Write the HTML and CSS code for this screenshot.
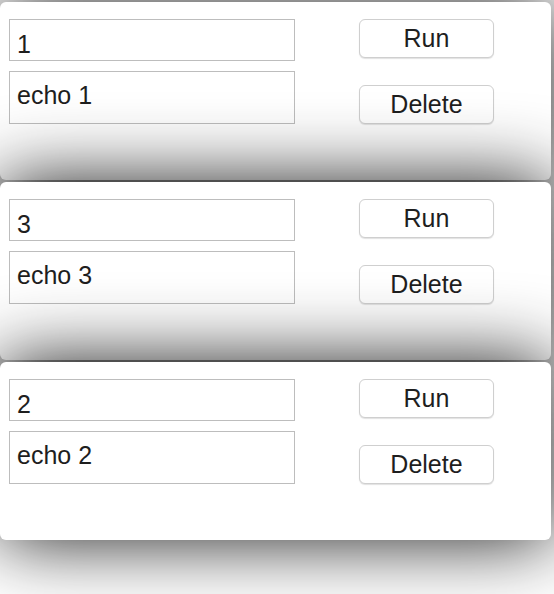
FILE: index.html
```html
<!DOCTYPE html>
<html>
<head>
<meta charset="utf-8">
<link rel="stylesheet" href="styles.css">
</head>
<body>
<div class="list">
  <div class="card">
    <div class="fields">
      <input class="name" type="text" value="1">
      <textarea class="cmd">echo 1</textarea>
    </div>
    <div class="actions">
      <button class="btn">Run</button>
      <button class="btn">Delete</button>
    </div>
  </div>
  <div class="card">
    <div class="fields">
      <input class="name" type="text" value="3">
      <textarea class="cmd">echo 3</textarea>
    </div>
    <div class="actions">
      <button class="btn">Run</button>
      <button class="btn">Delete</button>
    </div>
  </div>
  <div class="card">
    <div class="fields">
      <input class="name" type="text" value="2">
      <textarea class="cmd">echo 2</textarea>
    </div>
    <div class="actions">
      <button class="btn">Run</button>
      <button class="btn">Delete</button>
    </div>
  </div>
</div>
</body>
</html>
```
FILE: styles.css
```css
html, body {
  margin: 0;
  background: #ffffff;
  font-family: "Liberation Sans", Arial, sans-serif;
}

body {
  min-height: 594px;
}

.list {
  display: flex;
  flex-direction: column;
  gap: 2px;
  padding: 2px 0 54px;
  width: 551px;
}

.card {
  height: 178px;
  flex: none;
  box-sizing: border-box;
  background: #ffffff;
  border-radius: 6px;
  box-shadow: 0 0 76px rgba(0, 0, 0, 0.9);
  display: flex;
  align-items: flex-start;
  gap: 64px;
  padding: 17px 0 0 9px;
}

.fields {
  display: flex;
  flex-direction: column;
  gap: 10px;
  width: 286px;
}

.name,
.cmd {
  box-sizing: border-box;
  width: 286px;
  margin: 0;
  border: 1px solid #bdbdbd;
  border-radius: 0;
  background: #ffffff;
  color: #1e1e1e;
  font-family: "Liberation Sans", Arial, sans-serif;
  font-size: 25px;
  outline: none;
}

.name {
  height: 42px;
  padding: 10px 7px 2px;
}

.cmd {
  display: block;
  height: 53px;
  padding: 8px 7px 0;
  line-height: 30px;
  resize: none;
  overflow: hidden;
}

.actions {
  display: flex;
  flex-direction: column;
  justify-content: space-between;
  width: 135px;
  height: 105px;
}

.btn {
  height: 39px;
  margin: 0;
  padding: 0;
  border: 1px solid #cfcfcf;
  border-radius: 6px;
  background: #ffffff;
  box-shadow: 0 1px 1px rgba(0, 0, 0, 0.12);
  color: #1e1e1e;
  font-family: "Liberation Sans", Arial, sans-serif;
  font-size: 25px;
}
```
